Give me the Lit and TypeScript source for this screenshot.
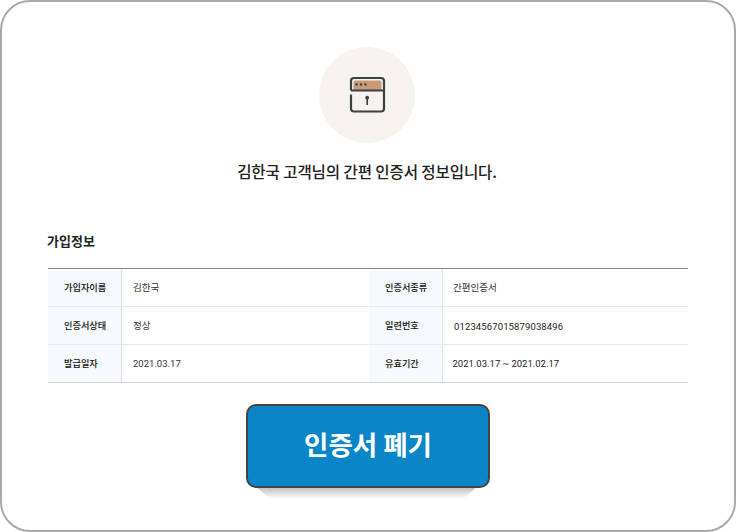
import { LitElement, html, css, svg } from "lit";
import { customElement } from "lit/decorators.js";

const rows = [
  ["가입자이름", "김한국", "인증서종류", "간편인증서", ""],
  ["인증서상태", "정상", "일련번호", "01234567015879038496", "serial"],
  ["발급일자", "2021.03.17", "유효기간", "2021.03.17 ~ 2021.02.17", "range"],
];

const icon = svg`<svg width="38" height="38" viewBox="0 0 38 38" fill="none">
  <path d="M5.5 6.5a2 2 0 0 1 2-2h24a2 2 0 0 1 2 2v7.5h-28z" fill="#c99a78"/>
  <path d="M3 14.5V5a3 3 0 0 1 3-3h27a3 3 0 0 1 3 3V32.5a3 3 0 0 1-3 3H6a3 3 0 0 1-3-3V18.5" stroke="#3c3f44" stroke-width="2.2"/>
  <path d="M3 14.5H36" stroke="#3c3f44" stroke-width="2"/>
  <circle cx="8.5" cy="8.5" r="1.2" fill="#3c3f44"/><circle cx="13" cy="8.5" r="1.2" fill="#3c3f44"/><circle cx="17.5" cy="8.5" r="1.2" fill="#3c3f44"/>
  <circle cx="19.2" cy="21.7" r="1.9" fill="#3c3f44"/><path d="M19.2 22V29" stroke="#3c3f44" stroke-width="1.7"/>
</svg>`;

@customElement("app-root")
export class AppRoot extends LitElement {
  static styles = css`
    :host { display: block; width: 736px; height: 532px; font-family: "Noto Sans CJK KR", Roboto, sans-serif; color: #222; }
    .frame { box-sizing: border-box; width: 736px; height: 532px; border: 2px solid #a9a9a9; border-radius: 30px; background: #fff;
      padding: 45px 46px 0; display: flex; flex-direction: column; align-items: center; }
    .circle { width: 96px; height: 96px; margin-right: 2px; border-radius: 50%; background: #f6f3ef; display: flex; align-items: center; justify-content: center; flex: none; }
    .lead { margin: 16px 2px 0 0; font-size: 15.6px; line-height: 24px; font-weight: 500; color: #222; letter-spacing: -0.13px; }
    .title { align-self: stretch; margin: 48px 0 0 -1px; font-size: 13px; line-height: 20px; font-weight: 700; color: #222; }
    .table { align-self: stretch; margin-top: 17px; border-top: 1px solid #8a8a8a; border-bottom: 1px solid #d6d6d6; }
    .row { display: grid; grid-template-columns: 74px 247px 74px 1fr; height: 37px; border-bottom: 1px solid #e6e9ed; }
    .row:last-child { border-bottom: 0; }
    .th { background: #f7fafc; border-right: 1px solid #dfe3e8; display: flex; align-items: center; padding: 0 0 1px 16px; font-size: 9.2px; font-weight: 500; color: #111; }
    .td { display: flex; align-items: center; padding: 0 0 1px 11px; font-size: 9.5px; color: #333; font-family: Roboto, "Noto Sans CJK KR", sans-serif; }
    .td.num { padding-bottom: 0; }
    .td.alt { padding-left: 10px; }
    .td.serial { padding: 2px 0 0 11px; letter-spacing: 0.12px; color: #222; }
    .td.range { padding: 0 0 0 9.5px; color: #222; }
    .btn-wrap { position: relative; margin-top: 21px; flex: none; }
    .btn { position: relative; box-sizing: border-box; display: flex; align-items: center; justify-content: center; width: 244px; height: 84px;
      background: #0a85c7; border: 2px solid #444; border-radius: 10px; color: #fff; font-family: "Noto Sans CJK KR", sans-serif; font-size: 26.5px; font-weight: 700; padding: 0 0 5px; }
    .shadow { position: absolute; left: 9px; right: 12px; top: 82px; height: 13px; background: linear-gradient(#b8b8b8, #fff);
      clip-path: polygon(0 0, 100% 0, 93% 100%, 7% 100%); }
  `;

  render() {
    return html`<div class="frame">
      <div class="circle">${icon}</div>
      <p class="lead">김한국 고객님의 간편 인증서 정보입니다.</p>
      <h2 class="title">가입정보</h2>
      <div class="table">
        ${rows.map(([a, b, c, d, cls]) => html`<div class="row">
          <div class="th">${a}</div><div class="td ${/^\d/.test(b) ? "num" : ""}">${b}</div>
          <div class="th">${c}</div><div class="td alt ${cls}">${d}</div>
        </div>`)}
      </div>
      <div class="btn-wrap">
        <div class="shadow"></div>
        <button class="btn">인증서 폐기</button>
      </div>
    </div>`;
  }
}
